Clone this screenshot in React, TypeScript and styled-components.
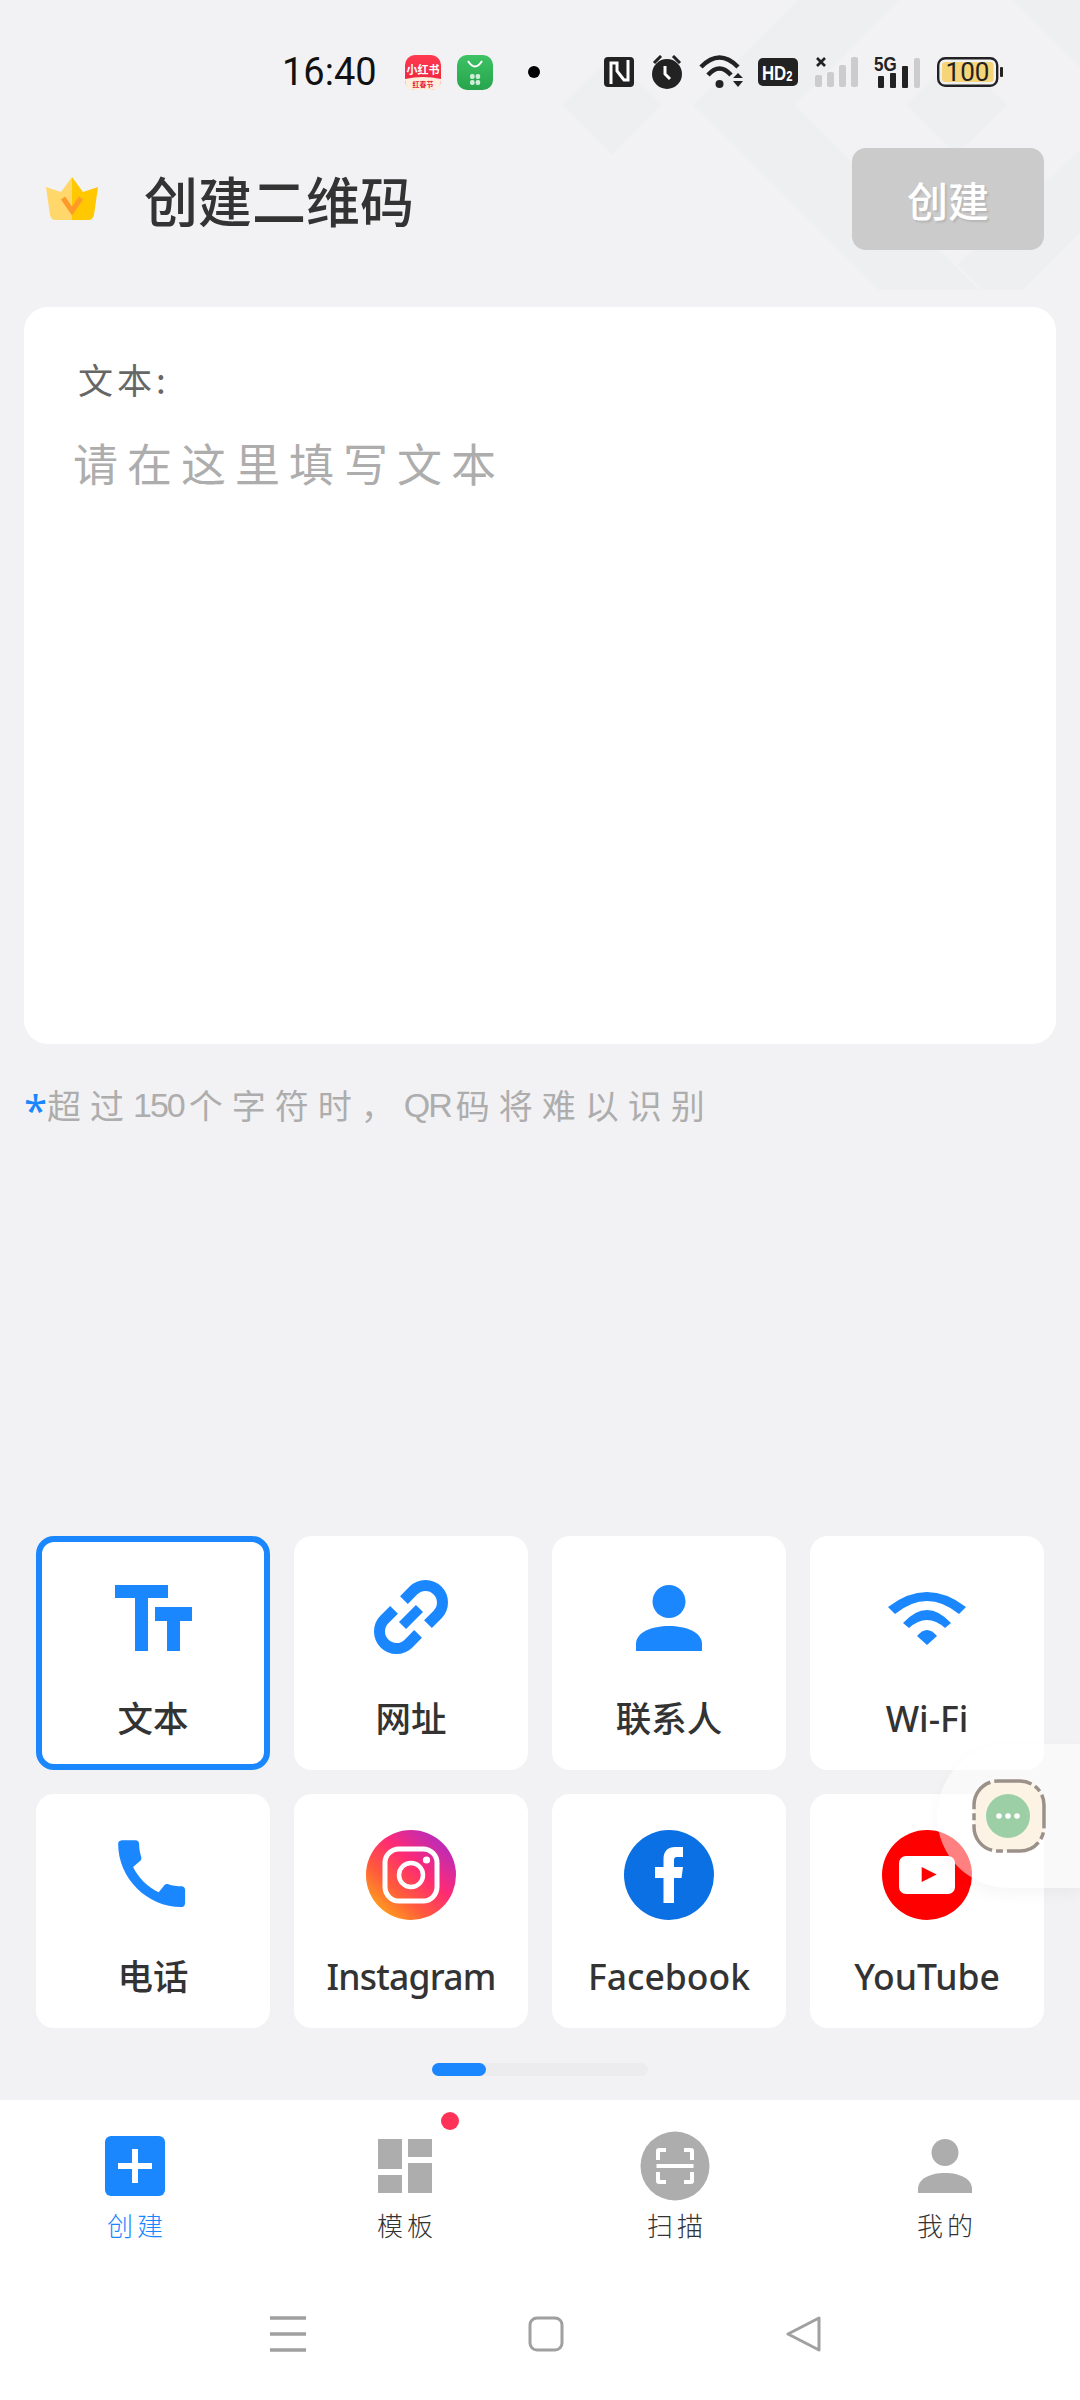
import styled, { createGlobalStyle } from 'styled-components';

const BLUE = '#1a87ff';
const CJK = '"Noto Sans", "Noto Sans CJK SC", sans-serif';
const LIGHT_CJK = '"Noto Sans CJK SC", sans-serif';

const GlobalStyle = createGlobalStyle`
    html, body {
        margin: 0;
        padding: 0;
        background: #f2f2f4;
    }
    * {
        box-sizing: border-box;
    }
    svg {
        display: block;
        flex-shrink: 0;
    }
`;

const Page = styled.div`
    position: relative;
    display: flex;
    flex-direction: column;
    width: 1080px;
    height: 2400px;
    overflow: hidden;
    background: #f2f2f4;
    font-family: ${CJK};
`;

const Backdrop = styled.svg`
    position: absolute;
    top: 0;
    left: 0;
`;

const StatusBar = styled.div`
    position: relative;
    display: flex;
    align-items: center;
    height: 144px;
    padding-left: 282px;
`;

const Clock = styled.span`
    width: 94px;
    margin-right: 29px;
    font: 400 38px Roboto, sans-serif;
    color: #111;
`;

const IconRow = styled.div`
    display: flex;
    align-items: center;
    gap: 16px;
`;

const WideIcon = styled.svg`
    overflow: visible;
`;

const NoticeDot = styled.span`
    width: 12px;
    height: 12px;
    margin: 0 64px 0 35px;
    border-radius: 50%;
    background: #000;
`;

const Header = styled.header`
    position: relative;
    display: flex;
    align-items: center;
    height: 102px;
    margin-top: 4px;
    padding: 0 36px 0 45px;
`;

const Title = styled.h1`
    margin: 0 0 0 45px;
    font: 500 54px ${LIGHT_CJK};
    color: #333;
`;

const CreateButton = styled.button`
    width: 192px;
    height: 102px;
    margin-left: auto;
    border: none;
    border-radius: 14px;
    background: #cbcbcb;
    color: #fff;
    font: 500 41px ${LIGHT_CJK};
    text-shadow: 2px 2px 2px rgba(0, 0, 0, 0.1);
`;

const EditorCard = styled.section`
    position: relative;
    height: 737px;
    margin: 57px 24px 0;
    padding: 50px 54px;
    border-radius: 24px;
    background: #fff;
`;

const FieldLabel = styled.div`
    height: 44px;
    font: 400 35px/44px ${LIGHT_CJK};
    letter-spacing: 4px;
    color: #666;
`;

const Placeholder = styled.div`
    margin-top: 34px;
    margin-left: -5px;
    font: 400 45px/56px ${LIGHT_CJK};
    letter-spacing: 9px;
    color: #adadad;
`;

const Hint = styled.p`
    position: relative;
    display: flex;
    align-items: center;
    height: 40px;
    margin: 41px 0 0 24px;
    font: 400 34px/40px ${LIGHT_CJK};
    letter-spacing: 9px;
    color: #adadad;
    white-space: nowrap;
`;

const Star = styled.span`
    width: 23px;
    height: 40px;
    font: 400 42px/50px "Noto Sans", sans-serif;
    letter-spacing: 0;
    color: ${BLUE};
`;

const Narrow = styled.span`
    margin-right: 5px;
    font-family: "Liberation Sans Narrow", "Liberation Sans", sans-serif;
    letter-spacing: -2px;
`;

const TypeGrid = styled.div`
    display: grid;
    grid-template-columns: repeat(4, 234px);
    grid-auto-rows: 234px;
    gap: 24px;
    margin-top: auto;
    padding: 0 36px;
`;

const Tile = styled.div<{ $selected?: boolean }>`
    display: flex;
    flex-direction: column;
    align-items: center;
    padding-top: 30px;
    border: 6px solid ${(props) => (props.$selected ? BLUE : 'transparent')};
    border-radius: 18px;
    background: #fff;
`;

const TileLabel = styled.span<{ $tight?: boolean }>`
    margin-top: 31px;
    font: 500 35.5px/50px ${CJK};
    letter-spacing: ${(props) => (props.$tight ? '-0.8px' : '0')};
    color: #333;
`;

const Pager = styled.div`
    width: 216px;
    height: 13px;
    margin: 35px auto 0;
    border-radius: 7px;
    background: #ececee;
`;

const PagerThumb = styled.div`
    width: 54px;
    height: 100%;
    border-radius: 7px;
    background: ${BLUE};
`;

const BottomArea = styled.nav`
    height: 300px;
    margin-top: 24px;
    background: #fff;
`;

const Tabs = styled.div`
    display: grid;
    grid-template-columns: repeat(4, 270px);
    height: 216px;
`;

const Tab = styled.div`
    position: relative;
    display: flex;
    flex-direction: column;
    align-items: center;
    padding-top: 31px;
`;

const TabLabel = styled.span<{ $active?: boolean }>`
    margin-top: 6px;
    padding-left: 4px;
    font: 300 26px/36px ${LIGHT_CJK};
    letter-spacing: 4px;
    color: ${(props) => (props.$active ? BLUE : '#333')};
`;

const TabBadge = styled.span`
    position: absolute;
    top: 12px;
    left: 171px;
    width: 18px;
    height: 18px;
    border-radius: 50%;
    background: #ff3358;
`;

const SystemNav = styled.div`
    display: flex;
    gap: 222px;
    padding-left: 270px;
`;

const FloatBubble = styled.div`
    position: absolute;
    top: 1744px;
    left: 937px;
    width: 143px;
    height: 144px;
    padding: 35px 0 0 35px;
    border-radius: 72px 0 0 72px;
    background: rgba(255, 255, 255, 0.5);
    box-shadow: 0 6px 16px rgba(0, 0, 0, 0.04);
`;

const BackdropArt = () => (
    <Backdrop width="1080" height="300" viewBox="0 0 1080 300" fill="#eeeff1">
        <path d="M562 105 L612 55 L662 105 L612 155Z" />
        <path d="M693 105 L798 0 H899 L795 105 L980 290 H878Z" />
        <path d="M906 105 L956 55 L1007 105 L956 155Z" />
        <path d="M1012 0 H1080 V68Z" />
        <path d="M957 265 L1080 150 V233 L1023 290 H982Z" />
    </Backdrop>
);

const RedNoteIcon = () => (
    <svg width="36" height="35" viewBox="0 0 36 35">
        <defs>
            <linearGradient id="rn" x1="0" y1="0" x2="0" y2="1">
                <stop offset="0" stopColor="#ff3b50" />
                <stop offset="1" stopColor="#e8203a" />
            </linearGradient>
        </defs>
        <rect width="36" height="35" rx="10" fill="url(#rn)" />
        <path d="M0 24 Q18 20 36 24 V25 Q36 35 26 35 H10 Q0 35 0 25Z" fill="#fdeedd" />
        <text x="18" y="19" textAnchor="middle" fontSize="11" fontWeight="700" fill="#fff" fontFamily={LIGHT_CJK}>
            小红书
        </text>
        <text x="18" y="32" textAnchor="middle" fontSize="7" fontWeight="700" fill="#e8203a" fontFamily={LIGHT_CJK}>
            红春节
        </text>
    </svg>
);

const ShopIcon = () => (
    <svg width="36" height="35" viewBox="0 0 36 35">
        <defs>
            <linearGradient id="shop" x1="0" y1="0" x2="0" y2="1">
                <stop offset="0" stopColor="#3dc264" />
                <stop offset="1" stopColor="#27a44c" />
            </linearGradient>
        </defs>
        <rect width="36" height="35" rx="10" fill="url(#shop)" />
        <path d="M11 6 Q18 17 25 6" fill="none" stroke="#fff" strokeWidth="2" />
        <g fill="#cfeeda">
            <rect x="13" y="19" width="4.6" height="5" rx="2" />
            <rect x="18.6" y="19" width="4.6" height="5" rx="2" />
            <rect x="13" y="25" width="4.6" height="5" rx="2" />
            <rect x="18.6" y="25" width="4.6" height="5" rx="2" />
        </g>
    </svg>
);

const NfcIcon = () => (
    <svg width="31" height="30" viewBox="0 0 31 30">
        <rect width="30" height="30" rx="4" fill="#222" />
        <path d="M7 27 V6 H13 V14 L20 23 H24 V3" fill="none" stroke="#fff" strokeWidth="3" />
    </svg>
);

const AlarmIcon = () => (
    <svg width="32" height="34" viewBox="0 0 32 34">
        <circle cx="16" cy="19" r="15" fill="#222" />
        <path d="M3 8 L10 1 M29 8 L22 1" stroke="#222" strokeWidth="3" />
        <path d="M14 11 V19 L19 24" fill="none" stroke="#fff" strokeWidth="3" />
    </svg>
);

const WifiStatusIcon = () => (
    <WideIcon width="43" height="34" viewBox="0 0 43 34">
        <g fill="none" stroke="#222" strokeWidth="4.5">
            <path d="M2 12 Q20.5 -7 39 12" />
            <path d="M9 20 Q20.5 7 32 20" />
        </g>
        <circle cx="20.5" cy="29" r="4" fill="#222" />
        <path d="M34 23 L39 18 L44 23Z M34 26 H44 L39 32Z" fill="#222" />
    </WideIcon>
);

const HdIcon = () => (
    <svg width="41" height="28" viewBox="0 0 41 28">
        <rect width="40" height="28" rx="5" fill="#222" />
        <text transform="translate(4 22) scale(0.8 1)" fontSize="21" fontWeight="700" fill="#fff" fontFamily="Liberation Sans">
            HD<tspan fontSize="14" dy="1">2</tspan>
        </text>
    </svg>
);

const SimOneIcon = () => (
    <svg width="43" height="30" viewBox="0 0 43 30">
        <path d="M2 1 L10 9 M10 1 L2 9" stroke="#222" strokeWidth="2.6" />
        <g fill="#ccc">
            <rect x="0" y="18" width="7" height="12" rx="2" />
            <rect x="12" y="15" width="7" height="15" rx="2" />
            <rect x="24" y="8" width="7" height="22" rx="2" />
            <rect x="36" y="0" width="7" height="30" rx="2" />
        </g>
    </svg>
);

const SimTwoIcon = () => (
    <WideIcon width="47" height="32" viewBox="0 0 47 32">
        <text transform="translate(0 15) scale(0.85 1)" fontSize="20" fontWeight="700" fill="#222" fontFamily="Liberation Sans">
            5G
        </text>
        <g fill="#222">
            <rect x="4" y="20" width="6" height="12" rx="1" />
            <rect x="16" y="17" width="6" height="15" rx="1" />
            <rect x="28" y="10" width="6" height="22" rx="1" />
        </g>
        <rect x="40" y="2" width="6" height="30" rx="2" fill="#ccc" />
    </WideIcon>
);

const BatteryIcon = () => (
    <svg width="66" height="30" viewBox="0 0 66 30">
        <rect x="1.2" y="1.2" width="59" height="27.6" rx="7" fill="none" stroke="#222" strokeWidth="2.4" />
        <rect x="5" y="5" width="51.5" height="20" rx="3" fill="#f6d478" />
        <rect x="63" y="10" width="3" height="10" rx="1" fill="#222" />
        <text x="30.5" y="24" textAnchor="middle" fontSize="26" fill="#222" fontFamily="Roboto">
            100
        </text>
    </svg>
);

const CrownIcon = () => (
    <svg width="54" height="44" viewBox="0 0 54 44">
        <path d="M27 0 L16 15 L1 10 L5 38 Q6 43 11 43 H27Z" fill="#ffd76a" />
        <path d="M27 0 L38 15 L53 10 L49 38 Q48 43 43 43 H27Z" fill="#ffc800" />
        <path d="M18 21 L27 34 L36 21" fill="none" stroke="#ff9a2a" strokeWidth="5" />
    </svg>
);

const TextTypeIcon = () => (
    <svg width="90" height="90" viewBox="0 0 90 90" fill={BLUE}>
        <path d="M7 13 H60 V26 H40 V79 H27 V26 H7Z" />
        <path d="M47 35 H84 V49 H72 V79 H59 V49 H47Z" />
    </svg>
);

const LinkIcon = () => (
    <svg width="90" height="90" viewBox="0 0 90 90">
        <g transform="rotate(-45 45 45)" fill="none" stroke={BLUE}>
            <path d="M38 28 H24.5 a17 17 0 0 0 0 34 H38" strokeWidth="11" />
            <path d="M52 28 H65.5 a17 17 0 0 1 0 34 H52" strokeWidth="11" />
            <path d="M33 45 H57" strokeWidth="10" />
        </g>
    </svg>
);

const ContactIcon = () => (
    <svg width="90" height="90" viewBox="0 0 90 90" fill={BLUE}>
        <circle cx="45" cy="29.5" r="16.5" />
        <path d="M12 79 V72 C12 60 28 54 45 54 C62 54 78 60 78 72 V79Z" />
    </svg>
);

const WifiIcon = () => (
    <svg width="90" height="90" viewBox="0 0 90 90" fill={BLUE}>
        <path d="M6 35 Q45 5 84 35 L77 42 Q45 16 13 42Z" />
        <path d="M21 51 Q45 25 69 51 L63 56 Q45 40 27 56Z" />
        <path d="M35 64 Q45 52 55 64 L45 73Z" />
    </svg>
);

const PhoneIcon = () => (
    <svg width="90" height="90" viewBox="0 0 90 90">
        <path
            transform="translate(-1 -1) scale(3.72)"
            fill={BLUE}
            d="M20.01 15.38c-1.23 0-2.42-.2-3.53-.56-.35-.12-.74-.03-1.01.24l-1.57 1.97c-2.83-1.35-5.48-3.9-6.89-6.83l1.95-1.66c.27-.28.35-.67.24-1.02-.37-1.11-.56-2.3-.56-3.53 0-.54-.45-.99-.99-.99H4.19C3.65 3 3 3.24 3 3.99 3 13.28 10.73 21 20.01 21c.71 0 .99-.63.99-1.18v-3.45c0-.54-.45-.99-.99-.99z"
        />
    </svg>
);

const InstagramIcon = () => (
    <svg width="90" height="90" viewBox="0 0 90 90">
        <defs>
            <linearGradient id="ig" x1="0.12" y1="0.92" x2="0.88" y2="0.08">
                <stop offset="0" stopColor="#ffa51a" />
                <stop offset="0.3" stopColor="#ff5a3c" />
                <stop offset="0.6" stopColor="#ff2a74" />
                <stop offset="1" stopColor="#b02cc4" />
            </linearGradient>
        </defs>
        <circle cx="45" cy="45" r="45" fill="url(#ig)" />
        <g fill="none" stroke="#fff">
            <rect x="19" y="19" width="52" height="52" rx="14" strokeWidth="5" />
            <circle cx="45" cy="45" r="12" strokeWidth="4.5" />
        </g>
        <circle cx="60.5" cy="30" r="3.6" fill="#fff" />
    </svg>
);

const FacebookIcon = () => (
    <svg width="90" height="90" viewBox="0 0 90 90">
        <circle cx="45" cy="45" r="45" fill="#0a70e4" />
        <path
            fill="#fff"
            d="M39.5 73 V48 H31 V37 H39.5 V29 C39.5 21 44 17 51 17 H59 V27 H53 C50.5 27 50 28.5 50 30.5 V37 H59 L57.5 48 H50 V73Z"
        />
    </svg>
);

const YouTubeIcon = () => (
    <svg width="90" height="90" viewBox="0 0 90 90">
        <circle cx="45" cy="45" r="45" fill="#ff0000" />
        <rect x="17" y="26" width="56" height="38" rx="7" fill="#fff" />
        <path d="M39.7 37 L54.6 44.5 L39.7 52Z" fill="#ff0000" />
    </svg>
);

const CreateTabIcon = () => (
    <svg width="70" height="70" viewBox="0 0 70 70">
        <rect x="5" y="5" width="60" height="60" rx="6" fill={BLUE} />
        <path d="M35 18 V52 M18 35 H52" stroke="#fff" strokeWidth="6" />
    </svg>
);

const TemplateTabIcon = () => (
    <svg width="70" height="70" viewBox="0 0 70 70" fill="#adadad">
        <rect x="8" y="8" width="24" height="30" />
        <rect x="38" y="8" width="24" height="18" />
        <rect x="8" y="44" width="24" height="18" />
        <rect x="38" y="32" width="24" height="30" />
    </svg>
);

const ScanTabIcon = () => (
    <svg width="70" height="70" viewBox="0 0 70 70">
        <circle cx="35" cy="35" r="34.5" fill="#adadad" />
        <g fill="none" stroke="#fff" strokeWidth="4">
            <path d="M26 19 H19 Q18 19 18 20 V29" />
            <path d="M44 19 H51 Q52 19 52 20 V29" />
            <path d="M26 51 H19 Q18 51 18 50 V41" />
            <path d="M44 51 H51 Q52 51 52 50 V41" />
            <path d="M16.5 35 H53.5" />
        </g>
    </svg>
);

const ProfileTabIcon = () => (
    <svg width="70" height="70" viewBox="0 0 70 70" fill="#adadad">
        <circle cx="35" cy="21.5" r="13.5" />
        <path d="M8 62 V58 C8 48 20 42 35 42 C50 42 62 48 62 58 V62Z" />
    </svg>
);

const MenuKey = () => (
    <svg width="36" height="36" viewBox="0 0 36 36">
        <path d="M0 2 H36 M0 18 H36 M0 34 H36" stroke="#a0a0a0" strokeWidth="3.6" />
    </svg>
);

const HomeKey = () => (
    <svg width="36" height="36" viewBox="0 0 36 36">
        <rect x="2" y="2" width="32" height="32" rx="7" fill="none" stroke="#a0a0a0" strokeWidth="3" />
    </svg>
);

const BackKey = () => (
    <svg width="36" height="36" viewBox="0 0 36 36">
        <path d="M33 2 V34 L2 18Z" fill="none" stroke="#a0a0a0" strokeWidth="3" strokeLinejoin="round" />
    </svg>
);

const AssistantIcon = () => (
    <svg width="74" height="74" viewBox="0 0 74 74">
        <rect x="2" y="2" width="70" height="70" rx="24" fill="#fdf3e4" stroke="#9c9189" strokeWidth="3.5" strokeDasharray="34 4 7 4" />
        <circle cx="36" cy="37" r="22" fill="#9ccfa6" />
        <g fill="#fff">
            <circle cx="27" cy="37" r="2.8" />
            <circle cx="36" cy="37" r="2.8" />
            <circle cx="45" cy="37" r="2.8" />
        </g>
    </svg>
);

const tiles = [
    { label: '文本', icon: <TextTypeIcon />, selected: true },
    { label: '网址', icon: <LinkIcon /> },
    { label: '联系人', icon: <ContactIcon /> },
    { label: 'Wi-Fi', icon: <WifiIcon /> },
    { label: '电话', icon: <PhoneIcon /> },
    { label: 'Instagram', icon: <InstagramIcon />, tight: true },
    { label: 'Facebook', icon: <FacebookIcon /> },
    { label: 'YouTube', icon: <YouTubeIcon /> },
];

const App = () => {
    return (
        <Page>
            <GlobalStyle />
            <BackdropArt />
            <StatusBar>
                <Clock>16:40</Clock>
                <IconRow>
                    <RedNoteIcon />
                    <ShopIcon />
                </IconRow>
                <NoticeDot />
                <IconRow>
                    <NfcIcon />
                    <AlarmIcon />
                    <WifiStatusIcon />
                    <HdIcon />
                    <SimOneIcon />
                    <SimTwoIcon />
                    <BatteryIcon />
                </IconRow>
            </StatusBar>
            <Header>
                <CrownIcon />
                <Title>创建二维码</Title>
                <CreateButton>创建</CreateButton>
            </Header>
            <EditorCard>
                <FieldLabel>文本:</FieldLabel>
                <Placeholder>请在这里填写文本</Placeholder>
            </EditorCard>
            <Hint>
                <Star>*</Star>
                <span>超过</span>
                <Narrow>150</Narrow>
                <span>个字符时，</span>
                <Narrow>QR</Narrow>
                <span>码将难以识别</span>
            </Hint>
            <TypeGrid>
                {tiles.map((tile) => (
                    <Tile key={tile.label} $selected={tile.selected}>
                        {tile.icon}
                        <TileLabel $tight={tile.tight}>{tile.label}</TileLabel>
                    </Tile>
                ))}
            </TypeGrid>
            <Pager>
                <PagerThumb />
            </Pager>
            <BottomArea>
                <Tabs>
                    <Tab>
                        <CreateTabIcon />
                        <TabLabel $active>创建</TabLabel>
                    </Tab>
                    <Tab>
                        <TemplateTabIcon />
                        <TabLabel>模板</TabLabel>
                        <TabBadge />
                    </Tab>
                    <Tab>
                        <ScanTabIcon />
                        <TabLabel>扫描</TabLabel>
                    </Tab>
                    <Tab>
                        <ProfileTabIcon />
                        <TabLabel>我的</TabLabel>
                    </Tab>
                </Tabs>
                <SystemNav>
                    <MenuKey />
                    <HomeKey />
                    <BackKey />
                </SystemNav>
            </BottomArea>
            <FloatBubble>
                <AssistantIcon />
            </FloatBubble>
        </Page>
    );
};

export default App;
